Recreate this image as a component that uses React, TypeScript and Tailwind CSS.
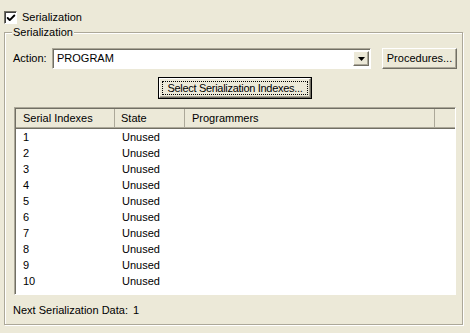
import { Check } from "lucide-react";

const rows = ["1", "2", "3", "4", "5", "6", "7", "8", "9", "10"];

const Raised = ({ children, className = "" }: { children: React.ReactNode; className?: string }) => (
  <div
    className={`flex items-center justify-center border border-t-white border-l-white border-r-[#716F64] border-b-[#716F64] bg-[#ECE9D8] shadow-[inset_-1px_-1px_0_#ACA899] ${className}`}
  >
    {children}
  </div>
);

const App = () => {
  return (
    <div className="w-[470px] h-[333px] bg-[#ECE9D8] text-[11px] leading-[13px] text-black font-['Liberation_Sans',Arial,sans-serif] pt-[11px] overflow-hidden">
      {/* checkbox row */}
      <div className="flex items-center pl-[4px] h-[13px]">
        <div className="w-[13px] h-[13px] bg-white border border-t-[#716F64] border-l-[#716F64] border-r-white border-b-white shadow-[inset_1px_1px_0_#404040] flex items-center justify-center">
          <Check size={10} strokeWidth={4.5} className="text-black" />
        </div>
        <span className="ml-[5px]">Serialization</span>
      </div>

      {/* group box */}
      <div className="relative ml-[4px] mt-[8px] w-[459px] h-[293px] border border-[#ACA899] shadow-[1px_1px_0_#fff,inset_1px_1px_0_#fff] pl-[8px] pt-[15px]">
        <span className="absolute left-[7px] -top-[7px] bg-[#ECE9D8] px-[1px]">Serialization</span>

        {/* action row */}
        <div className="flex items-center">
          <span className="w-[39px]">Action:</span>
          <div className="w-[319px] h-[21px] bg-white border border-t-[#ACA899] border-l-[#ACA899] border-r-white border-b-white shadow-[inset_1px_1px_0_#716F64] flex items-center">
            <span className="flex-1 pl-[4px]">PROGRAM</span>
            <Raised className="w-[16px] h-[15px] mr-[1px]">
              <svg width="7" height="4" viewBox="0 0 7 4">
                <path d="M0 0h7L3.5 4z" fill="#000" />
              </svg>
            </Raised>
          </div>
          <Raised className="ml-[11px] w-[75px] h-[21px] -mt-[1px]">Procedures...</Raised>
        </div>

        {/* select button */}
        <div className="mt-[8px] ml-[145px] w-[154px] h-[22px] border border-black">
          <Raised className="w-full h-full">
            <div className="w-[146px] h-[14px] border border-dotted border-black flex items-center justify-center whitespace-nowrap tracking-[-0.3px]">
              Select Serialization Indexes...
            </div>
          </Raised>
        </div>

        {/* table */}
        <div className="mt-[8px] ml-[1px] w-[442px] h-[188px] bg-white border border-t-[#ACA899] border-l-[#ACA899] border-r-white border-b-white shadow-[inset_1px_1px_0_#716F64] flex flex-col pt-[1px] pl-[1px]">
          <div className="flex h-[20px] bg-[#ECE9D8] border-b border-[#716F64] shadow-[inset_0_-1px_0_#ACA899]">
            <div className="w-[99px] pl-[7px] flex items-center border-r border-[#ACA899]">Serial Indexes</div>
            <div className="w-[70px] pl-[6px] flex items-center border-r border-[#ACA899]">State</div>
            <div className="w-[250px] pl-[7px] flex items-center border-r border-[#ACA899]">Programmers</div>
            <div className="w-[18px]" />
          </div>
          {rows.map((r) => (
            <div key={r} className="flex h-[16px] items-center">
              <div className="w-[99px] pl-[7px]">{r}</div>
              <div className="w-[70px] pl-[7px]">Unused</div>
            </div>
          ))}
        </div>

        {/* footer */}
        <div className="mt-[9px] flex">
          <span className="w-[120px]">Next Serialization Data:</span>
          <span>1</span>
        </div>
      </div>
    </div>
  );
};

export default App;
